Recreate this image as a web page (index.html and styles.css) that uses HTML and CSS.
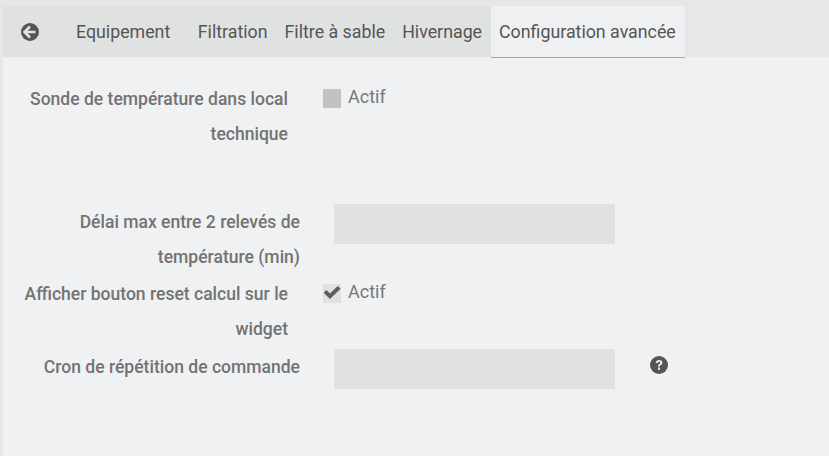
FILE: index.html
```html
<!DOCTYPE html>
<html lang="fr">
<head>
<meta charset="utf-8">
<title>Configuration avancée</title>
<link rel="stylesheet" href="styles.css">
</head>
<body>
<div class="panel">
  <nav class="tabs">
    <a class="tab tab-back"><svg class="icon" viewBox="0 0 18 18"><circle cx="9" cy="9" r="9"/><path class="icon-mark" d="M9 3.500 3.500 9 9 14.500M4 9h10.500"/></svg></a>
    <a class="tab tab-first">Equipement</a>
    <a class="tab">Filtration</a>
    <a class="tab">Filtre à sable</a>
    <a class="tab">Hivernage</a>
    <a class="tab tab-active">Configuration avancée</a>
  </nav>
  <form class="content">
    <div class="row row-check">
      <label class="label">Sonde de température dans local technique</label>
      <span class="check check-off"></span>
      <span class="check-text">Actif</span>
    </div>
    <div class="row row-input row-spaced">
      <label class="label">Délai max entre 2 relevés de température (min)</label>
      <span class="field"></span>
    </div>
    <div class="row row-check">
      <label class="label">Afficher bouton reset calcul sur le widget</label>
      <span class="check"><svg class="tick" viewBox="0 0 18 19"><path d="M2 7.400 7 12.200 16.200 3.400"/></svg></span>
      <span class="check-text">Actif</span>
    </div>
    <div class="row row-input">
      <label class="label">Cron de répétition de commande</label>
      <span class="field"></span>
      <svg class="help" viewBox="0 0 18 18"><circle cx="9" cy="9" r="9"/><path class="help-mark" d="M5.700 7c.1-1.900 1.500-3 3.400-3 1.900 0 3.300 1.100 3.300 2.700 0 1.300-.8 1.900-1.600 2.400-.7.400-.9.700-.9 1.300H8c0-1.400.5-2 1.300-2.500.7-.4 1-.7 1-1.200 0-.6-.5-1-1.200-1-.8 0-1.200.5-1.300 1.300zM8 11.500h2v2.300H8z"/></svg>
    </div>
  </form>
</div>
</body>
</html>
```
FILE: styles.css
```css
* { box-sizing: border-box; }
html, body { margin: 0; height: 100%; }
body {
  background: #e7e7e8;
  padding: 6px 0 0 3px;
  font-family: Roboto, "Liberation Sans", sans-serif;
  color: #666;
  overflow: hidden;
}
.panel { display: flex; flex-direction: column; height: 100%; }
.tabs { display: flex; height: 52px; flex: none; border-bottom: 1px solid #eff0f2; }
.tab {
  display: flex;
  align-items: center;
  padding: 0 8.5px;
  background: #e0e2e1;
  color: #555;
  font-size: 17.8px;
  white-space: nowrap;
}
.tab-back { width: 54px; padding-left: 18px; }
.tab-first { padding: 0 19px; }
.tab-active {
  background: #eff0f2;
  border-bottom: 1px solid #97c03c;
  margin-bottom: -1px;
  padding-right: 9.5px;
}
.icon { width: 18px; height: 18px; fill: #555; display: block; }
.icon-mark { fill: none; stroke: #e0e2e1; stroke-width: 2.600; }
.content { flex: 1; background: #f0f1f3; padding-top: 24px; }
.row { display: flex; align-items: flex-start; margin-bottom: 2px; }
.row-spaced { margin-top: 52px; }
.label {
  display: block;
  flex: none;
  text-align: right;
  font-size: 17.55px;
  font-weight: 500;
  line-height: 35px;
  color: #737373;
}
.row-check { min-height: 70px; }
.row-check .label { width: 285px; }
.check {
  display: block;
  flex: none;
  width: 18px;
  height: 19px;
  margin: 7px 0 0 35px;
  background: #e0e2e1;
}
.check-off { background: #c2c2c2; }
.check-text { font-size: 18px; line-height: 30px; margin-left: 7px; color: #777; }
.tick { display: block; width: 18px; height: 19px; fill: none; stroke: #5f5f5f; stroke-width: 4; }
.row-input .label { width: 297px; padding-top: 1px; }
.field { flex: none; margin-left: 34px; width: 281px; height: 40px; background: #e0e2e1; }
.help { flex: none; width: 18px; height: 18px; margin: 7px 0 0 35px; fill: #555; }
.help-mark { fill: #f0f1f3; }
```
